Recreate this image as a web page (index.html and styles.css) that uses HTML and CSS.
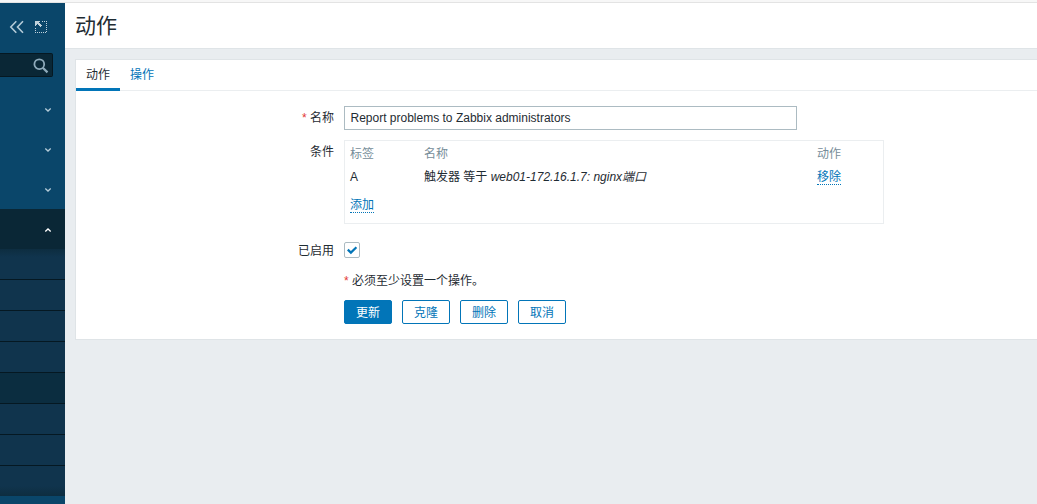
FILE: index.html
```html
<!DOCTYPE html>
<html lang="zh-CN">
<head>
<meta charset="utf-8">
<title>动作</title>
<link rel="stylesheet" href="styles.css">
</head>
<body>
<div class="top-strip"></div>
<div class="layout">
  <aside class="sidebar">
    <div class="sidebar-tools">
      <svg class="icon-collapse" width="16" height="14" viewBox="0 0 16 14"><path d="M7.300 1.200 1.800 7l5.500 5.800M14 1.200 8.500 7l5.500 5.800" fill="none" stroke="#b4cbd8" stroke-width="1.600"/></svg>
      <svg class="icon-compact" width="12" height="12" viewBox="0 0 12 12" shape-rendering="crispEdges"><path d="M7 .5h5M11.500 0v12M0 11.500h12M.5 7v5" fill="none" stroke="#c0d2dc" stroke-dasharray="1 1"/><path d="M0 0h5v1H4v1h1v1h1v1h1v1H6v1H5V5H4V4H3V3H2v1H1v1H0z" fill="#c0d2dc"/></svg>
    </div>
    <div class="search">
      <svg width="16" height="16" viewBox="0 0 16 16"><circle cx="6.300" cy="6.200" r="4.900" fill="none" stroke="#8fabbb" stroke-width="1.800"/><path d="m9.800 9.700 4.700 4.700" stroke="#8fabbb" stroke-width="2.200"/></svg>
    </div>
    <nav class="menu">
      <div class="menu-item"><svg width="8" height="6" viewBox="0 0 8 6"><path d="m1.300 1.500 2.700 2.500 2.700-2.500"/></svg></div>
      <div class="menu-item"><svg width="8" height="6" viewBox="0 0 8 6"><path d="m1.300 1.500 2.700 2.500 2.700-2.500"/></svg></div>
      <div class="menu-item"><svg width="8" height="6" viewBox="0 0 8 6"><path d="m1.300 1.500 2.700 2.500 2.700-2.500"/></svg></div>
      <div class="menu-item open"><svg width="8" height="6" viewBox="0 0 8 6"><path d="m1.300 4.500 2.700-2.500 2.700 2.500"/></svg></div>
      <div class="submenu">
        <div class="sub-item"></div>
        <div class="sub-item"></div>
        <div class="sub-item"></div>
        <div class="sub-item"></div>
        <div class="sub-item selected"></div>
        <div class="sub-item"></div>
        <div class="sub-item"></div>
        <div class="sub-item"></div>
      </div>
    </nav>
  </aside>
  <main class="content">
    <header class="page-header"><h1>动作</h1></header>
    <section class="panel">
      <div class="tabs">
        <a class="tab active">动作</a>
        <a class="tab">操作</a>
      </div>
      <form class="form">
        <label class="label"><span class="required">*</span> 名称</label>
        <div class="field input">Report problems to Zabbix administrators</div>

        <label class="label">条件</label>
        <div class="field conditions">
          <div class="cond-row head"><span>标签</span><span>名称</span><span>动作</span></div>
          <div class="cond-row"><span>A</span><span>触发器 等于 <em>web01-172.16.1.7: nginx端口</em></span><span><a class="link">移除</a></span></div>
          <div class="cond-add"><a class="link">添加</a></div>
        </div>

        <label class="label enabled-label">已启用</label>
        <div class="field checkbox"><svg width="12" height="12" viewBox="0 0 12 12"><path d="m1.800 5.600 3.100 3 5.500-5.300" fill="none" stroke="#0275b8" stroke-width="2.200"/></svg></div>

        <div class="field note"><span class="required">*</span> 必须至少设置一个操作。</div>
        <div class="field buttons">
          <button type="button" class="btn primary">更新</button>
          <button type="button" class="btn">克隆</button>
          <button type="button" class="btn">删除</button>
          <button type="button" class="btn">取消</button>
        </div>
      </form>
    </section>
  </main>
</div>
</body>
</html>
```

FILE: styles.css
```css
* { box-sizing: border-box; }
body {
  margin: 0;
  height: 504px;
  overflow: hidden;
  background: #e9edf0;
  color: #1f2c33;
  font: 12px/18px "Liberation Sans", "Noto Sans CJK SC", sans-serif;
}
svg { display: block; }
.top-strip { height: 3px; background: #f7f7f7; border-bottom: 1px solid #e3e3e3; }
.layout { display: flex; height: 501px; }

.sidebar { width: 65px; flex: none; background: #0a466a; }
.sidebar-tools { display: flex; height: 50px; padding: 17px 0 0 9px; }
.icon-compact { margin: 1px 0 0 10px; }
.search {
  display: flex;
  justify-content: flex-end;
  width: 53px;
  height: 24px;
  padding: 4px 3px 0 0;
  background: #0a2736;
  border: 1px solid #051822;
  border-left: 0;
  border-radius: 0 2px 2px 0;
}
.menu { padding-top: 12px; }
.menu-item {
  display: flex;
  align-items: center;
  justify-content: flex-end;
  height: 40px;
  padding: 1px 13px 0 0;
}
.menu-item path { fill: none; stroke: #b4cbd8; stroke-width: 1.3; }
.menu-item.open { background: #0a2736; }
.menu-item.open path { stroke: #fff; }
.submenu {
  height: 247px;
  background: linear-gradient(#0d2d40, #10344d 8px, #10344d 237px, #0d2d40);
}
.sub-item { height: 31px; border-bottom: 1px solid #051822; }
.sub-item:last-child { height: 30px; border-bottom: 0; }
.sub-item.selected { background: #0b2d40; }

.content { flex: 1; min-width: 0; }
.page-header {
  height: 46px;
  padding: 8px 0 0 10px;
  background: #fff;
  border-bottom: 1px solid #dfe4e7;
}
h1 { margin: 0; font-size: 21px; line-height: 30px; font-weight: 400; }
.panel {
  height: 281px;
  margin: 10px 0 0 10px;
  background: #fff;
  border: 1px solid #dfe4e7;
  border-right: 0;
}
.tabs { display: flex; height: 31px; border-bottom: 1px solid #ebeef0; }
.tab { height: 31px; padding: 6px 10px 0; color: #0275b8; }
.tab.active { color: #1f2c33; border-bottom: 3px solid #0275b8; }
.form {
  display: grid;
  grid-template-columns: 258px 540px;
  grid-template-rows: 24px 92px 16px 22px 24px;
  gap: 10px;
  padding-top: 15px;
}
.label { text-align: right; line-height: 24px; white-space: nowrap; }
.required { color: #e33734; }
.field { grid-column: 2; }
.input {
  width: 453px;
  height: 24px;
  padding: 0 5.500px;
  border: 1px solid #acbbc2;
  line-height: 22px;
}
.conditions { height: 84px; padding: 4px 5px; border: 1px solid #ebeef0; }
.cond-row { display: grid; grid-template-columns: 74px 393px 1fr; height: 23px; }
.cond-row.head { color: #768d99; }
.cond-add { padding-top: 5px; }
.link { display: inline-block; height: 17px; line-height: 18px; color: #0275b8; border-bottom: 1px dotted #0275b8; }
.enabled-label { line-height: 18px; }
.checkbox { width: 16px; height: 16px; padding: 1px; border: 1px solid #acbbc2; border-radius: 2px; }
.note { padding-top: 4px; }
.buttons { display: flex; gap: 10px; }
.btn {
  width: 48px;
  height: 24px;
  padding: 2px 0 0;
  background: #fff;
  border: 1px solid #0275b8;
  border-radius: 2px;
  color: #0275b8;
  font: inherit;
  line-height: 20px;
}
.btn.primary { background: #0275b8; color: #fff; }
```
